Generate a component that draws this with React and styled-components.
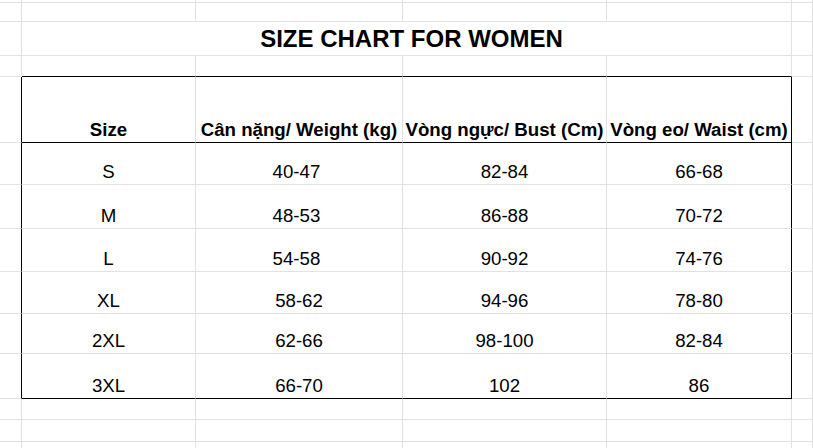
import styled, { createGlobalStyle } from "styled-components";

const GlobalStyle = createGlobalStyle`
  html, body {
    margin: 0;
    padding: 0;
    background: #ffffff;
  }
  body {
    font-family: "Liberation Sans", Arial, sans-serif;
    color: #000000;
  }
`;

const GRID = "#e2e2e2";
const INK = "#000000";

const Sheet = styled.div`
  display: grid;
  grid-template-columns: 22px 174px 207px 204px 185px 21px;
  grid-template-rows: 2px 20px 34px 21px 66px 42px 44px 43px 42px 40px 45px 21px 22px 7px;
  width: 813px;
  height: 448px;
  overflow: hidden;
  background: #ffffff;
`;

const Cell = styled.div`
  box-sizing: border-box;
  display: flex;
  align-items: flex-end;
  justify-content: center;
  padding: 0 0 2px ${(p) => p.$indent || 0}px;
  border-right: 1px solid ${(p) => (p.$right ? INK : GRID)};
  border-bottom: 1px solid ${(p) => (p.$bottom ? INK : GRID)};
  grid-column: ${(p) => (p.$span ? `span ${p.$span}` : "auto")};
  font-size: ${(p) => p.$size || 18.67}px;
  font-weight: ${(p) => (p.$bold ? 700 : 400)};
  line-height: 1.15;
  white-space: pre;
`;

const headers = [
  "Size",
  "Cân nặng/ Weight (kg)",
  "Vòng ngực/ Bust (Cm)",
  "Vòng eo/ Waist (cm)",
];

// trailing spaces kept as typed in the sheet
const sizes = [
  ["S", "40-47 ", "82-84", "66-68"],
  ["M", "48-53 ", "86-88", "70-72"],
  ["L", "54-58 ", "90-92", "74-76"],
  ["XL", "58-62", "94-96", "78-80"],
  ["2XL", "62-66", "98-100", "82-84"],
  ["3XL", "66-70", "102", "86"],
];

const EmptyRow = ({ bottom }) => (
  <>
    <Cell />
    {[0, 1, 2, 3].map((i) => (
      <Cell key={i} $bottom={bottom} />
    ))}
    <Cell />
  </>
);

const Row = ({ values, last }) => (
  <>
    <Cell $right />
    {values.map((v, i) => (
      <Cell key={i} $bottom={last} $right={i === 3}>
        {v}
      </Cell>
    ))}
    <Cell />
  </>
);

export default function App() {
  return (
    <>
      <GlobalStyle />
      <Sheet>
        <EmptyRow />
        <EmptyRow />

        <Cell />
        <Cell $span={4} $size={24} $bold $indent={10}>
          SIZE CHART FOR WOMEN
        </Cell>
        <Cell />

        <EmptyRow bottom />

        <Cell $right />
        {headers.map((h, i) => (
          <Cell key={h} $bold $bottom $right={i === 3}>
            {h}
          </Cell>
        ))}
        <Cell />

        {sizes.map((row, r) => (
          <Row key={row[0]} values={row} last={r === sizes.length - 1} />
        ))}

        <EmptyRow />
        <EmptyRow />
        <EmptyRow />
      </Sheet>
    </>
  );
}
